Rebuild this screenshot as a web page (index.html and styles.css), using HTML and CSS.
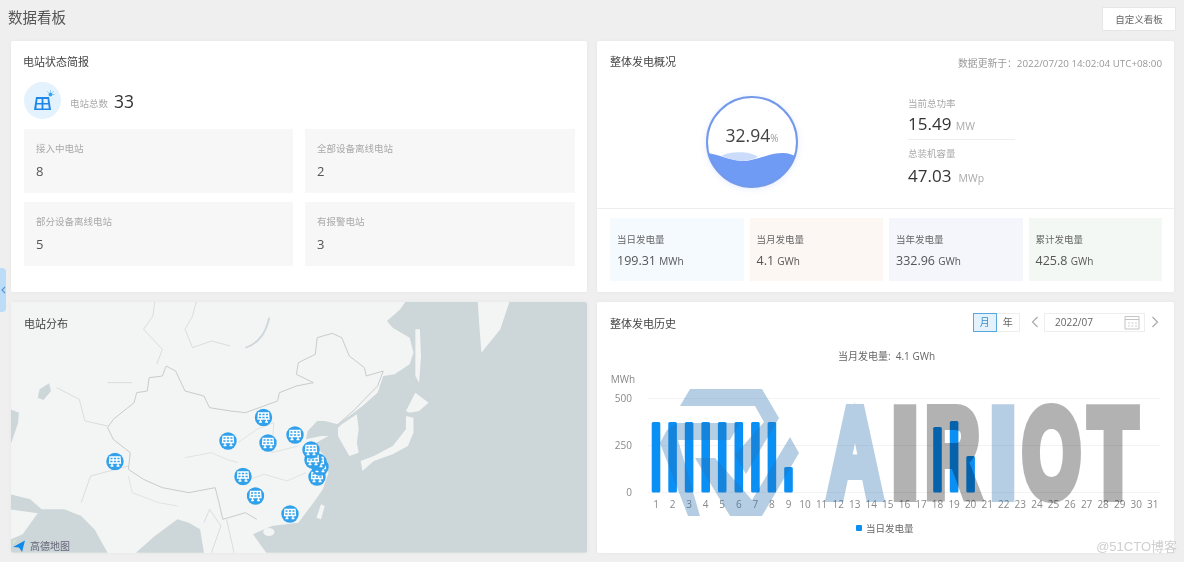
FILE: index.html
```html
<!DOCTYPE html>
<html lang="zh">
<head>
<meta charset="utf-8">
<title>数据看板</title>
<link rel="stylesheet" href="styles.css">
</head>
<body>
<svg class="defs" width="0" height="0" aria-hidden="true">
  <symbol id="pin" viewBox="-9 -9 18 18">
    <circle r="8.7" fill="#31a1ec"/>
    <path d="M-5-4.5H5L5.5 1.5H-5.5ZM-5.2-1.5H5.2M-1.8-4.5V1.5M1.8-4.5V1.5M-3 1.5V4.5M3 1.5V4.5M-4.5 4.5H-1.5M1.5 4.5H4.5" fill="none" stroke="#fff" stroke-width="1.3"/>
  </symbol>
</svg>
<button class="collapse" type="button" aria-label="收起"><svg width="5" height="8" viewBox="0 0 5 8"><path d="M4 1L1 4L4 7" fill="none" stroke="#4f97d8" stroke-width="1.1"/></svg></button>
<div class="page">
  <header class="top">
    <h1 class="page-title">数据看板</h1>
    <button class="custom" type="button">自定义看板</button>
  </header>
  <main class="grid">
    <section class="card status">
      <h2 class="card-title status-title">电站状态简报</h2>
      <div class="total">
        <span class="total-icon">
          <svg width="24" height="22" viewBox="0 0 24 22">
            <path d="M5 7H18L20 20H3Z" fill="#1f87e8"/>
            <path d="M6.5 9H10.6V13H6ZM12.4 9H16.6L17 13H12.4ZM5.8 14.6H10.6V18.4H5.4ZM12.4 14.6H17.3L17.8 18.4H12.4Z" fill="#e3f2fd"/>
            <circle cx="19.5" cy="4.5" r="2" fill="#35a4f0"/>
            <path d="M19.5 0.5V1.6M23.4 4.5H22.4M22.4 1.6L21.6 2.4M16.6 1.6L17.4 2.4" stroke="#35a4f0" stroke-width="0.9"/>
          </svg>
        </span>
        <span class="total-label">电站总数</span>
        <span class="total-num">33</span>
      </div>
      <div class="tiles">
        <div class="tile"><div class="tile-label">接入中电站</div><div class="tile-num">8</div></div>
        <div class="tile"><div class="tile-label">全部设备离线电站</div><div class="tile-num">2</div></div>
        <div class="tile"><div class="tile-label">部分设备离线电站</div><div class="tile-num">5</div></div>
        <div class="tile"><div class="tile-label">有报警电站</div><div class="tile-num">3</div></div>
      </div>
    </section>

    <section class="card overview">
      <div class="ov-top">
        <div class="head-row">
          <h2 class="card-title">整体发电概况</h2>
          <span class="updated">数据更新于：2022/07/20 14:02:04 UTC+08:00</span>
        </div>
        <div class="ov-body">
          <div class="gauge">
            <svg class="gauge-art" width="92" height="92" viewBox="0 0 92 92">
              <defs><clipPath id="round"><circle cx="46" cy="46" r="45"/></clipPath></defs>
              <circle cx="46" cy="46" r="46" fill="#fff"/>
              <g clip-path="url(#round)">
                <path d="M0 57C12 58 24 65 37 65C50 65 62 57 77 57C83 57 88 59 92 62V92H0Z" fill="#6f9bf5"/>
                <path d="M15 60C22 56 42 54 52 61C45 64 40 65 37 65C28 65 22 62 15 60Z" fill="#cbdcfb"/>
              </g>
              <circle cx="46" cy="46" r="45" fill="none" stroke="#7399ea" stroke-width="2"/>
            </svg>
            <div class="gauge-text"><span class="gauge-num">32.94</span><span class="gauge-unit">%</span></div>
          </div>
          <div class="ov-stats">
            <div class="stat stat-first">
              <div class="stat-label">当前总功率</div>
              <div class="stat-val">15.49 <span class="stat-unit">MW</span></div>
            </div>
            <div class="stat">
              <div class="stat-label">总装机容量</div>
              <div class="stat-val">47.03 <span class="stat-unit">&nbsp;MWp</span></div>
            </div>
          </div>
        </div>
      </div>
      <div class="ov-tiles">
        <div class="ov-tile tint-blue"><div class="ov-label">当日发电量</div><div class="ov-val">199.31 <span class="ov-unit">MWh</span></div></div>
        <div class="ov-tile tint-red"><div class="ov-label">当月发电量</div><div class="ov-val">4.1 <span class="ov-unit">GWh</span></div></div>
        <div class="ov-tile tint-violet"><div class="ov-label">当年发电量</div><div class="ov-val">332.96 <span class="ov-unit">GWh</span></div></div>
        <div class="ov-tile tint-green"><div class="ov-label">累计发电量</div><div class="ov-val">425.8 <span class="ov-unit">GWh</span></div></div>
      </div>
    </section>

    <section class="card map-card">
      <svg class="map" viewBox="11 302 576 251" preserveAspectRatio="none">
        <rect x="11" y="302" width="576" height="251" fill="#f3f4f4"/>
        <g transform="translate(0 296) scale(.3776 .33333)">
          <g fill="#cdd6d9">
            <path d="M1075 15L1060 40L1025 75L1040 95L1085 125L1095 170L1085 205L1045 235L1015 240L1000 290L960 330L925 360L895 385L860 375L840 375L815 405L810 430L850 420L870 420L830 445L860 480L870 530L855 580L830 620L790 680L720 690L670 715L705 770H1556V15Z"/>
            <path d="M360 770L410 720L470 670L500 680L530 700L540 770Z"/>
            <path d="M28 595L80 610L110 640L170 640L215 660L250 700L285 770H28Z"/>
            <path d="M105 280L130 262L135 285L115 312L100 305Z"/>
            <path d="M28 340L50 350L48 380L30 440H28Z"/>
          </g>
          <g fill="#f3f4f4">
            <path d="M895 395L905 385L945 355L950 400L945 440L950 470L925 480L905 440L895 420Z"/>
            <path d="M955 495L990 480L1040 450L1075 400L1075 360L1095 365L1095 410L1080 450L1040 475L990 495L975 510L960 525Z"/>
            <path d="M1075 345L1100 290L1135 320L1110 345L1085 350Z"/>
            <path d="M1100 100L1112 100L1115 180L1110 260L1100 240L1100 170Z"/>
            <path d="M850 625L860 630L850 670L838 665Z"/>
            <ellipse cx="712" cy="708" rx="15" ry="12"/>
            <path d="M1265 15H1350L1325 100L1275 170L1270 100Z"/>
            <path d="M28 640L100 652L60 715L28 730Z"/>
          </g>
          <path class="lake" d="M650 155C690 140 705 105 713 65"/>
          <path class="border" d="M285 395L300 370L355 320L362 290L390 285L395 245L430 240L440 210L465 225L490 285L540 300L555 335L610 345L650 350L735 315L740 290L785 270L830 260L785 235L790 200L835 175L840 125L880 112L905 125L925 180L965 215L970 240L1015 225L1000 270L965 310L940 340L895 385"/>
          <path class="border" d="M285 395L300 430L345 470L340 520L380 550L430 575L500 590L570 575L580 620L590 670L650 650L680 670"/>
          <path class="border-light" d="M410 15L405 60L380 100L430 160L415 205M520 15L510 60L490 100L510 155L560 135L610 150M285 260L350 260M150 275L210 310L225 375L285 390M215 620L240 540L340 510M540 680L555 640L585 690L560 770M600 670L620 770"/>
          <path class="river" d="M490 485L560 470L600 490L630 500M660 550L700 535L760 555L810 530M630 440L680 400L725 380L720 470L790 450M340 540L350 590L420 620L470 630"/>
        </g>
        <use href="#pin" x="254.5" y="408.5" width="18" height="18"/>
        <use href="#pin" x="219" y="432" width="18" height="18"/>
        <use href="#pin" x="259" y="434" width="18" height="18"/>
        <use href="#pin" x="286" y="426" width="18" height="18"/>
        <use href="#pin" x="106" y="452.5" width="18" height="18"/>
        <use href="#pin" x="234" y="467.5" width="18" height="18"/>
        <use href="#pin" x="246.5" y="487" width="18" height="18"/>
        <use href="#pin" x="281" y="505" width="18" height="18"/>
        <use href="#pin" x="308" y="468" width="18" height="18"/>
        <use href="#pin" x="311" y="458" width="18" height="18"/>
        <use href="#pin" x="309" y="453" width="18" height="18"/>
        <use href="#pin" x="304" y="451" width="18" height="18"/>
        <use href="#pin" x="302" y="441" width="18" height="18"/>
      </svg>
      <h2 class="card-title map-title">电站分布</h2>
      <div class="amap">
        <svg width="14" height="14" viewBox="0 0 14 14"><path d="M13 1.5L10 13L7 8.5L1 8Z" fill="#0f8ae8"/><path d="M1 1H5L1 6Z" fill="#cfeac4"/></svg>
        <span>高德地图</span>
      </div>
    </section>

    <section class="card history">
      <div class="head-row hist-head">
        <h2 class="card-title">整体发电历史</h2>
        <div class="hist-tools">
          <div class="seg"><span class="seg-item seg-on">月</span><span class="seg-item">年</span></div>
          <svg class="chev" width="8" height="12" viewBox="0 0 8 12"><path d="M6.5 1L1.5 6L6.5 11" fill="none" stroke="#aaa" stroke-width="1.2"/></svg>
          <div class="date">
            <span>2022/07</span>
            <svg width="16" height="15" viewBox="0 0 16 15"><path d="M1 1.5H15V14H1ZM1 4.5H15" fill="none" stroke="#c4c4c4"/><path d="M4 8H6M7.5 8H9.5M11 8H13M4 11H6M7.5 11H9.5M11 11H13" stroke="#cfcfcf"/></svg>
          </div>
          <svg class="chev" width="8" height="12" viewBox="0 0 8 12"><path d="M1.5 1L6.5 6L1.5 11" fill="none" stroke="#aaa" stroke-width="1.2"/></svg>
        </div>
      </div>
      <div class="month-sum">当月发电量:&nbsp;&nbsp;4.1 GWh</div>
      <svg class="chart" viewBox="597 368 577 185">
        <g class="grid-lines">
          <path d="M648 398.5H1160M648 445.5H1160M648 492.5H1160"/>
        </g>
        <g class="axis">
          <text x="623" y="383" class="ax-mid">MWh</text>
          <text x="632" y="402" class="ax-end">500</text>
          <text x="632" y="449" class="ax-end">250</text>
          <text x="632" y="496" class="ax-end">0</text>
        </g>
        <g class="bars">
          <rect x="651.7" y="422" width="8.6" height="70.5" rx="1.5"/>
          <rect x="668.3" y="422" width="8.6" height="70.5" rx="1.5"/>
          <rect x="684.8" y="422" width="8.6" height="70.5" rx="1.5"/>
          <rect x="701.4" y="422" width="8.6" height="70.5" rx="1.5"/>
          <rect x="717.9" y="422" width="8.6" height="70.5" rx="1.5"/>
          <rect x="734.5" y="422" width="8.6" height="70.5" rx="1.5"/>
          <rect x="751.1" y="422" width="8.6" height="70.5" rx="1.5"/>
          <rect x="767.6" y="422" width="8.6" height="70.5" rx="1.5"/>
          <rect x="784.2" y="467" width="8.6" height="25.5" rx="1.5"/>
          <rect x="933.2" y="427" width="8.6" height="65.5" rx="1.5"/>
          <rect x="949.8" y="421" width="8.6" height="71.5" rx="1.5"/>
          <rect x="966.3" y="456" width="8.6" height="36.5" rx="1.5"/>
        </g>
        <g class="days">
          <text x="656" y="508">1</text><text x="672.6" y="508">2</text><text x="689.1" y="508">3</text><text x="705.7" y="508">4</text><text x="722.2" y="508">5</text><text x="738.8" y="508">6</text><text x="755.4" y="508">7</text><text x="771.9" y="508">8</text><text x="788.5" y="508">9</text><text x="805" y="508">10</text><text x="821.6" y="508">11</text><text x="838.2" y="508">12</text><text x="854.7" y="508">13</text><text x="871.3" y="508">14</text><text x="887.8" y="508">15</text><text x="904.4" y="508">16</text><text x="921" y="508">17</text><text x="937.5" y="508">18</text><text x="954.1" y="508">19</text><text x="970.6" y="508">20</text><text x="987.2" y="508">21</text><text x="1003.8" y="508">22</text><text x="1020.3" y="508">23</text><text x="1036.9" y="508">24</text><text x="1053.4" y="508">25</text><text x="1070" y="508">26</text><text x="1086.6" y="508">27</text><text x="1103.1" y="508">28</text><text x="1119.7" y="508">29</text><text x="1136.2" y="508">30</text><text x="1152.8" y="508">31</text>
        </g>
        <rect x="856" y="525" width="6" height="6" rx="1" class="legend-dot"/>
        <text x="866" y="531.5" class="legend">当日发电量</text>
        <g class="wm-blue">
          <path d="M680 406L690 389H762L779 418L746 474L735 455L764 422L755 406Z"/>
          <path d="M677 423H740L730 440H678L700 516H688L660 443L667 430Z"/>
          <path d="M695 458H715L752 500L790 437L799 453L762 516H730Z"/>
          <text x="828" y="496" textLength="54" lengthAdjust="spacingAndGlyphs">A</text>
          <text x="990" y="496" textLength="26" lengthAdjust="spacingAndGlyphs">I</text>
        </g>
        <g class="wm-gray">
          <text x="892" y="496" textLength="26" lengthAdjust="spacingAndGlyphs">I</text>
          <text x="925.4" y="496" textLength="54" lengthAdjust="spacingAndGlyphs">R</text>
          <text x="1022.4" y="496" textLength="58" lengthAdjust="spacingAndGlyphs">O</text>
          <text x="1089" y="496" textLength="48" lengthAdjust="spacingAndGlyphs">T</text>
        </g>
      </svg>
    </section>
  </main>
</div>
<div class="credit">@51CTO博客</div>
</body>
</html>
```
FILE: styles.css
```css
* { box-sizing: border-box; margin: 0; padding: 0; }
html, body { height: 100%; }
body {
  background: #efefef;
  font-family: "Open Sans", "Noto Sans CJK SC", sans-serif;
  color: #444;
  overflow: hidden;
  position: relative;
  filter: blur(0.5px);
}
.defs { position: absolute; }
.page { padding: 0 10px 0 11px; }
.top {
  height: 41px;
  display: flex;
  justify-content: space-between;
  align-items: flex-start;
  margin-left: -3px;
  margin-right: -2px;
}
.page-title { font-size: 14.5px; font-weight: 400; color: #555; line-height: 20px; margin-top: 8px; }
.custom {
  margin-top: 7px;
  width: 74px;
  height: 24px;
  background: #fff;
  border: 1px solid #e6e6e6;
  border-radius: 1px;
  font: 9.5px "Noto Sans CJK SC", sans-serif;
  color: #666;
}
.grid {
  display: grid;
  grid-template-columns: 576px 577px;
  grid-template-rows: 251px 251px;
  gap: 10px;
}
.card {
  background: #fff;
  border-radius: 2px;
  box-shadow: 0 0 4px rgba(0, 0, 0, .04);
  overflow: hidden;
}
.card-title { font-size: 11px; font-weight: 400; color: #444; line-height: 16px; }

.status { padding: 13px 13px 0; }
.status-title { margin-left: -1px; }
.total { display: flex; align-items: center; margin-top: 12px; height: 37px; }
.total-icon {
  width: 37px;
  height: 37px;
  border-radius: 50%;
  background: #e3f2fd;
  display: flex;
  align-items: center;
  justify-content: center;
}
.total-label { font-size: 9.5px; color: #aaa; margin-left: 9px; margin-top: 4px; }
.total-num { font-size: 17.5px; font-weight: 400; color: #333; margin-left: 6px; }
.tiles {
  display: grid;
  grid-template-columns: 269px 270px;
  grid-auto-rows: 64px;
  column-gap: 12px;
  row-gap: 9px;
  margin-top: 10px;
}
.tile { background: #f7f7f8; padding: 13px 12px 0; }
.tile-label { font-size: 9.5px; color: #aaa; line-height: 14px; }
.tile-num { font-size: 13px; color: #555; margin-top: 6px; line-height: 18px; }

.overview { display: flex; flex-direction: column; }
.ov-top { height: 168px; border-bottom: 1px solid #eee; padding: 13px 12px 0 13px; }
.head-row { display: flex; justify-content: space-between; align-items: center; }
.updated { font-size: 9.8px; color: #999; white-space: nowrap; margin-top: 2px; }
.ov-body { display: flex; margin-top: 26px; padding-left: 96px; }
.gauge { display: grid; width: 92px; height: 92px; filter: drop-shadow(0 1px 3px rgba(110, 150, 240, .18)); }
.gauge-art, .gauge-text { grid-area: 1 / 1; }
.gauge-text { text-align: center; padding-top: 26px; line-height: 26px; color: #444; }
.gauge-num { font-size: 17.5px; }
.gauge-unit { font-size: 10px; color: #999; }
.ov-stats { margin-left: 110px; width: 107px; margin-top: 1px; }
.stat-first { border-bottom: 1px solid #eee; height: 43px; margin-bottom: 7px; }
.stat-label { font-size: 9.5px; color: #aaa; line-height: 14px; }
.stat-val { font-size: 17px; color: #333; line-height: 26px; margin-top: 0; }
.stat-unit { font-size: 10.5px; color: #aaa; }
.stat + .stat .stat-val { margin-top: 2px; }
.ov-tiles {
  display: grid;
  grid-template-columns: repeat(4, 1fr);
  gap: 6px;
  padding: 9px 12px 0 13px;
}
.ov-tile { height: 63px; padding: 15px 7px 0; }
.tint-blue { background: #f5fafe; }
.tint-red { background: #fdf7f4; }
.tint-violet { background: #f5f5fc; }
.tint-green { background: #f4f8f5; }
.ov-label { font-size: 9.5px; color: #666; line-height: 14px; }
.ov-val { font-size: 12.5px; color: #555; line-height: 18px; margin-top: 5px; }
.ov-unit { font-size: 10px; }

.map-card { position: relative; }
.map { display: block; width: 576px; height: 251px; }
.map-title { position: absolute; left: 13px; top: 14px; }
.lake { fill: none; stroke: #cdd6d9; stroke-width: 5; }
.border, .border-light, .river { fill: none; vector-effect: non-scaling-stroke; }
.border { stroke: #c8cbcc; stroke-width: 1; }
.border-light { stroke: #dadcdd; stroke-width: 1; }
.river { stroke: #e0e2e3; stroke-width: 1; }
.amap {
  position: absolute;
  left: 1px;
  bottom: 0;
  display: flex;
  align-items: center;
  gap: 4px;
  font-size: 10px;
  color: #667;
  line-height: 14px;
}

.history { padding-top: 13px; }
.hist-head { padding: 0 13px; height: 18px; }
.hist-tools { display: flex; align-items: center; margin-top: -4px; margin-right: -1px; }
.seg { display: flex; height: 19px; }
.seg-item {
  width: 23.5px;
  border: 1px solid #eee;
  border-left: 0;
  font-size: 10px;
  line-height: 17px;
  text-align: center;
  color: #666;
}
.seg-on { background: #e3f2fd; border: 1px solid #5aa7e0; color: #3a8fd0; }
.chev { margin: 0 5px 0 11px; }
.chev:last-child { margin: 0 3px 0 6px; }
.date {
  width: 101px;
  height: 19px;
  border: 1px solid #eee;
  padding: 0 4px 0 10px;
  display: flex;
  align-items: center;
  justify-content: space-between;
  font-size: 10px;
  color: #666;
}
.month-sum { text-align: center; font-size: 10px; color: #666; line-height: 14px; margin-top: 16px; margin-left: 2px; }
.chart { display: block; width: 577px; height: 185px; margin-top: 5px; }
.grid-lines path { stroke: #f3f3f3; fill: none; }
.axis text { font-size: 10px; fill: #888; }
.ax-mid { text-anchor: middle; fill: #666; }
.ax-end { text-anchor: end; }
.bars rect, .legend-dot { fill: #0a8ff5; }
.days text { font-size: 10px; fill: #888; text-anchor: middle; }
.legend { font-size: 9.5px; fill: #666; }
.wm-blue, .wm-gray {
  font-family: "Liberation Sans", sans-serif;
  font-weight: 700;
  font-size: 125px;
  stroke-width: 12;
  stroke-linejoin: miter;
}
.wm-blue { fill: #2a6fb0; stroke: #2a6fb0; opacity: .34; }
.wm-blue path { stroke: none; }
.wm-gray { fill: #000; stroke: #000; opacity: .3; }

.collapse {
  position: absolute;
  left: 0;
  top: 268px;
  width: 6px;
  height: 44px;
  background: #bcdcf8;
  border: 0;
  border-radius: 0 4px 4px 0;
  display: flex;
  align-items: center;
  justify-content: center;
}
.credit {
  position: absolute;
  right: 7px;
  top: 536px;
  font: 13px "Liberation Sans", "Noto Sans CJK SC", sans-serif;
  color: #cfcfcf;
}
```
